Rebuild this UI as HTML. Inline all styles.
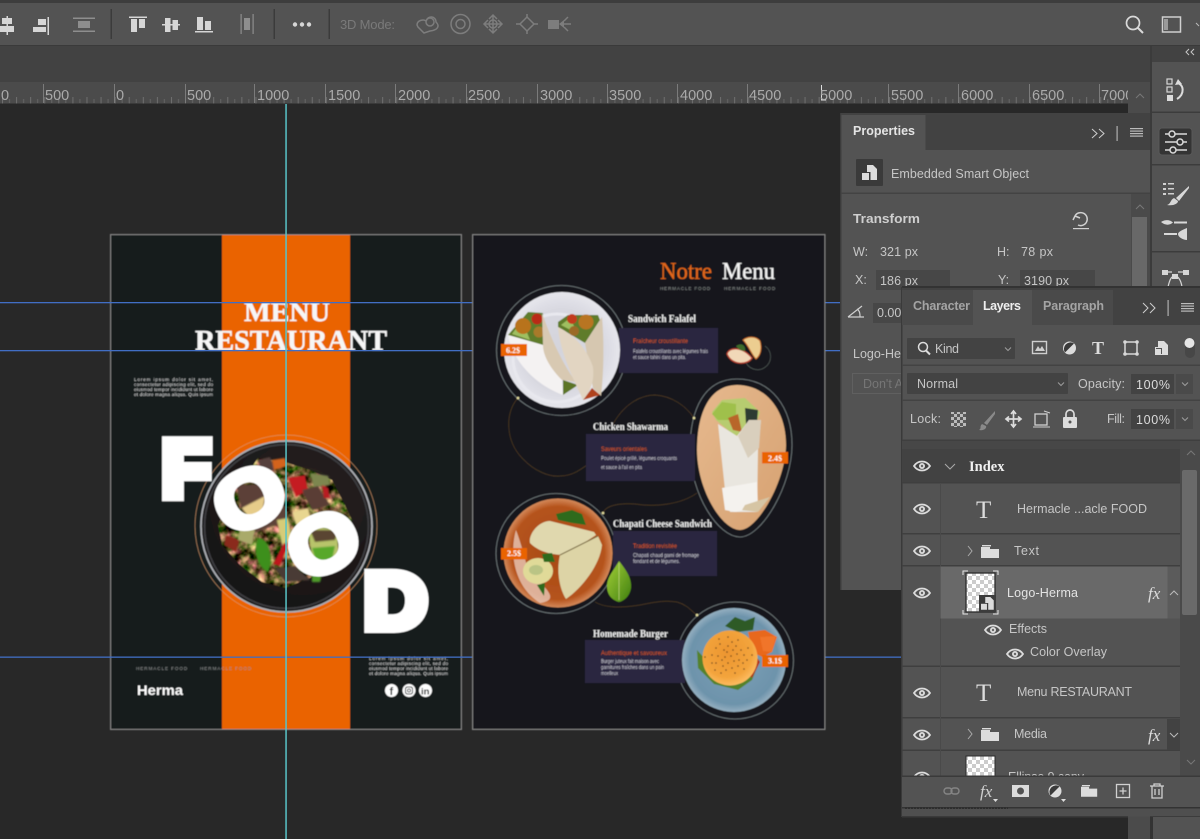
<!DOCTYPE html>
<html><head><meta charset="utf-8"><title>Menu Restaurant</title>
<style>
html,body{margin:0;padding:0;background:#282828;width:1200px;height:839px;overflow:hidden}
svg{display:block;position:absolute;left:0;top:0}
text{font-family:"Liberation Sans",sans-serif}
.s{font-family:"Liberation Serif",serif}
.ru{font-size:14.5px;fill:#aaa}
.ui{font-size:12.5px;fill:#c6c6c6}
.tab{font-size:12.5px;font-weight:bold;fill:#a4a4a4}
.t1{font-family:"Liberation Serif",serif;font-weight:bold;fill:#f2f2f2;font-size:10.5px}
.o1{fill:#d9561c;font-size:6px}
.w1{fill:#d0d0d8;font-size:5px}
.lo{fill:#dedede;font-size:4.6px}
.hf{fill:#8d9090;font-size:4.6px;letter-spacing:.8px}
.pr{font-family:"Liberation Serif",serif;font-weight:bold;font-size:8px;fill:#fff}
</style></head><body>
<svg width="1200" height="839" viewBox="0 0 1200 839" xmlns="http://www.w3.org/2000/svg">
<defs>
<filter id="b" x="-5%" y="-5%" width="110%" height="110%"><feGaussianBlur stdDeviation=".4"/></filter>
<filter id="b3" x="-5%" y="-5%" width="110%" height="110%"><feGaussianBlur stdDeviation=".7"/></filter>
<filter id="n" x="0" y="0" width="100%" height="100%" color-interpolation-filters="sRGB"><feTurbulence type="fractalNoise" baseFrequency=".12" numOctaves="3" seed="4" stitchTiles="noStitch"/><feColorMatrix values="1.800 0 0 0 -.500  1.100 .6 0 0 -.500  1.200 0 0 0 -.420  0 0 0 0 1"/><feComposite in2="SourceAlpha" operator="in"/></filter>
<pattern id="chk" width="8" height="8" patternUnits="userSpaceOnUse"><rect width="8" height="8" fill="#fff"/><rect width="4" height="4" fill="#ccc"/><rect x="4" y="4" width="4" height="4" fill="#ccc"/></pattern>
<pattern id="lk" width="6" height="6" patternUnits="userSpaceOnUse"><rect width="6" height="6" fill="#5a5a5a"/><rect width="3" height="3" fill="#bbb"/><rect x="3" y="3" width="3" height="3" fill="#bbb"/></pattern>
<pattern id="tk" width="14.08" height="6" patternUnits="userSpaceOnUse" patternTransform="translate(2 97)"><rect x="0" width="1" height="6" fill="#6f6f6f"/><rect x="7" y="2" width="1" height="4" fill="#656565"/></pattern>
<radialGradient id="pl1" cx=".5" cy=".5" r=".5"><stop offset="0" stop-color="#d4d4dc"/><stop offset=".7" stop-color="#d8d8e0"/><stop offset="1" stop-color="#e6e6ec"/></radialGradient>
<radialGradient id="pl3" cx=".5" cy=".5" r=".5"><stop offset="0" stop-color="#a74a14"/><stop offset=".85" stop-color="#b5531c"/><stop offset="1" stop-color="#d4895a"/></radialGradient>
<radialGradient id="pl4" cx=".5" cy=".5" r=".5"><stop offset="0" stop-color="#7fa2b8"/><stop offset=".85" stop-color="#6d93ab"/><stop offset="1" stop-color="#95afc0"/></radialGradient>
<radialGradient id="bun" cx=".45" cy=".4" r=".6"><stop offset="0" stop-color="#ec9530"/><stop offset=".75" stop-color="#f3a43c"/><stop offset="1" stop-color="#fdbb60"/></radialGradient>
<radialGradient id="bowl" cx=".6" cy=".35" r=".7"><stop offset="0" stop-color="#2b2524"/><stop offset="1" stop-color="#151213"/></radialGradient>
<linearGradient id="wood" x1="0" y1="0" x2="1" y2="1"><stop offset="0" stop-color="#e6b98e"/><stop offset="1" stop-color="#d6a171"/></linearGradient>
<linearGradient id="leaf" x1="0" y1="0" x2="1" y2="1"><stop offset="0" stop-color="#a4d038"/><stop offset="1" stop-color="#3f7f10"/></linearGradient>
<g id="eye"><path d="M-8 0C-4-6 4-6 8 0C4 6-4 6-8 0Z" fill="none" stroke="#dcdcdc" stroke-width="1.8"/><circle r="3" fill="#dcdcdc"/><circle r="1.2" fill="#666"/></g>
<g id="fold"><path d="M0 2H9V4H18V13H0Z" fill="#dcdcdc"/><rect x="1" y="0" width="9" height="1.4" fill="#dcdcdc"/></g>
<g id="so"><path d="M5 0H11L15 4V15H8.500V7H5Z" fill="#dcdcdc"/><rect x="0" y="8" width="7" height="7" fill="#dcdcdc"/></g>
<g id="gear" fill="none" stroke="#dadada" stroke-width="1.500"><path d="M0 0H22M0 8H22M0 16H22"/><g fill="#333"><circle cx="7" cy="0" r="3"/><circle cx="15" cy="8" r="3"/><circle cx="8" cy="16" r="3"/></g></g>
<g id="dd"><path d="M-3-1.5L0 1.5L3-1.5" fill="none" stroke="#9c9c9c" stroke-width="1"/></g>
</defs>

<!-- chrome -->
<rect width="1200" height="839" fill="#282828"/>
<rect width="1200" height="3" fill="#3d3d3d"/>
<rect y="3" width="1200" height="42" fill="#535353"/>
<rect y="45" width="1200" height="1.500" fill="#3a3a3a"/>
<rect y="46" width="1200" height="36" fill="#424242"/>
<rect y="82" width="1150" height="21.500" fill="#4b4b4b"/>
<rect y="97" width="1128" height="6.500" fill="url(#tk)"/>
<g fill="#7b7b7b"><rect x="43" y="84" width="1" height="19"/><rect x="114" y="84" width="1" height="19"/><rect x="185" y="84" width="1" height="19"/><rect x="254" y="84" width="1" height="19"/><rect x="325" y="84" width="1" height="19"/><rect x="395" y="84" width="1" height="19"/><rect x="466" y="84" width="1" height="19"/><rect x="537" y="84" width="1" height="19"/><rect x="607" y="84" width="1" height="19"/><rect x="677" y="84" width="1" height="19"/><rect x="747" y="84" width="1" height="19"/><rect x="888" y="84" width="1" height="19"/><rect x="958" y="84" width="1" height="19"/><rect x="1029" y="84" width="1" height="19"/><rect x="1099" y="84" width="1" height="19"/></g>
<path d="M821.500 85V100H826" stroke="#ddd" fill="none"/>
<text class="ru" x="1" y="100">0</text><text class="ru" x="45" y="100">500</text><text class="ru" x="116" y="100">0</text><text class="ru" x="187" y="100">500</text><text class="ru" x="257" y="100">1000</text><text class="ru" x="328" y="100">1500</text><text class="ru" x="398" y="100">2000</text><text class="ru" x="468" y="100">2500</text><text class="ru" x="540" y="100">3000</text><text class="ru" x="609" y="100">3500</text><text class="ru" x="680" y="100">4000</text><text class="ru" x="749" y="100">4500</text><text class="ru" x="820" y="100">5000</text><text class="ru" x="891" y="100">5500</text><text class="ru" x="961" y="100">6000</text><text class="ru" x="1032" y="100">6500</text><text class="ru" x="1101" y="100">7000</text>
<rect x="1128" y="82" width="22" height="757" fill="#4b4b4b"/>
<path d="M1136 98L1140 94L1144 98" stroke="#777" fill="none"/>

<!-- toolbar -->
<g fill="#d6d6d6">
<rect x="6.500" y="16" width="1.500" height="19"/><rect x="2" y="18" width="10" height="6"/><rect x="0" y="26" width="14" height="6"/>
<rect x="47.500" y="17" width="1.500" height="18"/><rect x="38" y="19" width="8" height="6"/><rect x="33" y="27" width="13" height="5"/>
<g fill="#8e8e8e"><rect x="73" y="17.500" width="22" height="1.500"/><rect x="73" y="30.500" width="22" height="1.500"/><rect x="78" y="21" width="12" height="7"/></g>
<rect x="129" y="16.500" width="18" height="1.500"/><rect x="131" y="19" width="6" height="13"/><rect x="139" y="19" width="6" height="9"/>
<rect x="162" y="24" width="18" height="1.500"/><rect x="165" y="18" width="5.500" height="14"/><rect x="172.500" y="20" width="5.500" height="10"/>
<rect x="195" y="31" width="18" height="1.500"/><rect x="197" y="17" width="6" height="13"/><rect x="205" y="21" width="6" height="9"/>
<g fill="#8e8e8e"><rect x="240.500" y="14" width="1.200" height="20"/><rect x="252.500" y="14" width="1.200" height="20"/><rect x="244" y="18" width="6" height="12"/></g>
<circle cx="295" cy="24.500" r="2.200"/><circle cx="302" cy="24.500" r="2.200"/><circle cx="309" cy="24.500" r="2.200"/>
</g>
<g fill="#3b3b3b"><rect x="110.500" y="9" width="1.500" height="30"/><rect x="273.500" y="9" width="1.500" height="30"/><rect x="328.500" y="9" width="1.500" height="30"/></g>
<text x="340" y="29" font-size="13" fill="#7a7a7a" textLength="55">3D Mode:</text>
<g fill="none" stroke="#7d7d7d" stroke-width="1.500">
<path d="M417 25C417 20 424 19 426 21C428 15 436 16 436 22C440 26 438 30 430 31L424 33L418 27Z"/><circle cx="430" cy="22" r="4"/>
<circle cx="460.500" cy="24" r="9.500"/><circle cx="460.500" cy="24" r="4.500"/>
<path d="M493 15V33M484 24H502M489 19L493 15L497 19M489 29L493 33L497 29M488 20L484 24L488 28M498 20L502 24L498 28"/><circle cx="493" cy="24" r="4"/>
<path d="M520 24L527 17L534 24L527 31Z"/><path d="M527 14V17M527 31V34M516 24H520M534 24H538"/>
<path d="M564 21L568 17M564 24H571M564 27L568 31"/>
</g>
<rect x="548" y="20" width="11" height="9" fill="#7d7d7d"/><path d="M559 24L564 20V28Z" fill="#7d7d7d"/>
<circle cx="1133" cy="23" r="6.500" fill="none" stroke="#dadada" stroke-width="1.700"/><path d="M1138 28L1143 33" stroke="#dadada" stroke-width="2"/>
<rect x="1162.500" y="17" width="18" height="15" fill="none" stroke="#d0d0d0" stroke-width="1.500"/><rect x="1164" y="19" width="4" height="11" fill="#9a9a9a"/>
<path d="M1196 23L1199 26" stroke="#bbb" fill="none"/>

<!-- artboard 1 -->
<g filter="url(#b)">
<rect x="110.500" y="234.500" width="351" height="495" fill="#161c1d" stroke="#8b8b8b" stroke-width="1"/>
<rect x="222" y="235" width="128" height="494" fill="#ea6400"/>
<circle cx="286" cy="526" r="91" fill="none" stroke="#d89a6a" stroke-width=".7" opacity=".8"/>
<circle cx="286.500" cy="526.500" r="85.500" fill="url(#bowl)" stroke="#a9abb0" stroke-width="1.800"/>
<circle cx="286.500" cy="526.500" r="82" fill="none" stroke="#3a3a3e" stroke-width="2"/>
<!-- food -->
<path d="M258 458L285 462L310 470L332 480L345 505L352 520L335 560L310 578L285 588L262 582L240 565L222 545L218 525L232 495Z" fill="#000" filter="url(#n)"/>
<g filter="url(#b3)">
<path d="M258 460L270 457L275 470L262 472Z" fill="#55403c"/><path d="M272 460L285 458L287 466L274 470Z" fill="#d4641e"/>
<path d="M288 478L305 475L308 490L296 497Z" fill="#c41c24"/>
<path d="M310 473L328 476L330 485L314 487Z" fill="#7d8650"/>
<path d="M302 490L318 486L330 505L312 510Z" fill="#5a3c34"/>
<path d="M322 485L328 488L330 498L324 498Z" fill="#b81a20"/>
<path d="M248 522L285 505L288 520L252 534Z" fill="#5d4339"/>
<path d="M292 512L308 508L312 522L296 525Z" fill="#e8d690"/>
<path d="M277 520L288 518L292 540L282 545Z" fill="#d6cc78"/>
<path d="M258 538C270 538 274 560 268 572C258 568 252 550 258 538Z" fill="#3e8f1a"/>
<path d="M284 543L288 545L280 566L273 564Z" fill="#c0141e"/>
<path d="M226 535L240 540L236 552L224 545Z" fill="#8a2c1c"/>
<path d="M240 528L255 530L252 545L238 540Z" fill="#a9aa6a"/>
<path d="M275 568L295 566L310 580L285 582Z" fill="#4a3a35"/>
<path d="M312 575L322 573L320 582L312 582Z" fill="#4f9a2a"/>
<path d="M308 528L338 528L338 558L312 562Z" fill="#b8c46a"/>
<path d="M312 548L335 546L332 560L316 561Z" fill="#58a82c"/>
<path d="M310 530L338 530L335 540L315 542Z" fill="#5a4430"/>
<path d="M236 485L265 484L265 508L242 512Z" fill="#5b4038"/>
<path d="M242 508L265 496L262 514L248 516Z" fill="#e6cc8a"/>
</g>
<!-- FOOD letters as live text -->
<g fill="#fff" stroke="#fff" font-weight="bold" style="font-family:'Liberation Sans',sans-serif">
<text x="162" y="496" font-size="79" stroke-width="10.500">F</text>
<text transform="translate(249.500 498.500) rotate(-25) scale(1.070 .930)" x="0" y="29" text-anchor="middle" font-size="85" stroke-width="7">O</text>
<text transform="translate(323.500 544) rotate(-25) scale(1.070 .930)" x="0" y="29" text-anchor="middle" font-size="85" stroke-width="7">O</text>
<text transform="translate(364 628) scale(1.100 1)" x="0" y="0" font-size="79" stroke-width="10">D</text>
</g>
<text class="s" x="244" y="321" font-size="27" font-weight="bold" fill="#f6f6f6" stroke="#f6f6f6" stroke-width=".4" textLength="86" lengthAdjust="spacingAndGlyphs">MENU</text>
<text class="s" x="195" y="350" font-size="28" font-weight="bold" fill="#f6f6f6" stroke="#f6f6f6" stroke-width=".4" textLength="192" lengthAdjust="spacingAndGlyphs">RESTAURANT</text>
<text class="lo" x="134" y="381" textLength="79" lengthAdjust="spacing">Lorem ipsum dolor sit amet,</text>
<text class="lo" x="134" y="386" textLength="79" lengthAdjust="spacing">consectetur adipiscing elit, sed do</text>
<text class="lo" x="134" y="391" textLength="79" lengthAdjust="spacing">eiusmod tempor incididunt ut labore</text>
<text class="lo" x="134" y="396" textLength="79" lengthAdjust="spacing">et dolore magna aliqua. Quis ipsum</text>
<text class="lo" x="369" y="660" textLength="79" lengthAdjust="spacing">Lorem ipsum dolor sit amet,</text>
<text class="lo" x="369" y="665" textLength="79" lengthAdjust="spacing">consectetur adipiscing elit, sed do</text>
<text class="lo" x="369" y="670" textLength="79" lengthAdjust="spacing">eiusmod tempor incididunt ut labore</text>
<text class="lo" x="369" y="675" textLength="79" lengthAdjust="spacing">et dolore magna aliqua. Quis ipsum</text>
<text class="hf" x="136" y="670" textLength="52">HERMACLE FOOD</text>
<text class="hf" x="200" y="670" textLength="52">HERMACLE FOOD</text>
<text x="137" y="695" font-size="14" font-weight="bold" fill="#fff" textLength="46" lengthAdjust="spacingAndGlyphs">Herma</text>
<circle cx="391.500" cy="690.500" r="6.500" fill="#fff"/><circle cx="409" cy="690.500" r="6.500" fill="#fff"/><circle cx="425.500" cy="690.500" r="6.500" fill="#fff"/>
<text x="389.500" y="695" font-size="11" font-weight="bold" fill="#161c1d">f</text>
<rect x="405.500" y="687" width="7" height="7" rx="2" fill="none" stroke="#161c1d"/><circle cx="409" cy="690.500" r="1.500" fill="none" stroke="#161c1d" stroke-width=".8"/>
<text x="421" y="694.500" font-size="9.500" font-weight="bold" fill="#161c1d">in</text>
</g>

<!-- guides -->
<g fill="#416ec4"><rect y="302" width="841" height="1.300"/><rect y="350" width="841" height="1.300"/><rect y="656.500" width="902" height="1.300"/></g>
<rect x="285.300" y="104" width="1.500" height="735" fill="#58c4c8"/>

<!-- artboard 2 -->
<g filter="url(#b)">
<rect x="472.500" y="234.500" width="352.500" height="495" fill="#14191b" stroke="#8b8b8b" stroke-width="1"/>
<text class="s" x="660" y="279" font-size="24" fill="#e0661a" textLength="52" lengthAdjust="spacingAndGlyphs" stroke="#e0661a" stroke-width=".3">Notre</text>
<text class="s" x="722" y="279" font-size="24" fill="#f4f4f4" textLength="53" lengthAdjust="spacingAndGlyphs" stroke="#f4f4f4" stroke-width=".3">Menu</text>
<text class="hf" x="660" y="290" textLength="51">HERMACLE FOOD</text>
<text class="hf" x="724" y="290" textLength="52">HERMACLE FOOD</text>
<!-- connectors -->
<g fill="none" stroke="#4f3a24" stroke-width=".7">
<path d="M518 398C505 412 505 440 522 458C535 472 550 477 560 476C572 476 580 470 587 465"/>
<path d="M611 428C622 405 640 395 655 395C672 396 686 406 694 418"/>
<path d="M603 513C606 505 620 503 635 504C655 507 680 505 697 493"/>
<path d="M595 602C605 608 620 608 640 605C655 602 665 600 677 602C688 605 692 612 697 615"/>
</g>
<!-- plate 1 -->
<circle cx="561.500" cy="350.500" r="65" fill="none" stroke="#737b7e" stroke-width=".8"/>
<path d="M745 360A13 13 0 1 0 765 346" fill="none" stroke="#4e5553" stroke-width=".7"/>
<rect x="619" y="328" width="99" height="45" fill="#2a2640"/>
<circle cx="562" cy="350" r="58" fill="url(#pl1)"/>
<circle cx="557" cy="358" r="44" fill="none" stroke="#e8e8ee" stroke-width="3"/>
<path d="M508 335L528 312L543 313L543 345Z" fill="#5f7c2c"/>
<path d="M512 334L522 320L530 340Z" fill="#9fbf60"/>
<circle cx="523" cy="326" r="8" fill="#b8731e"/><circle cx="537" cy="319" r="5.500" fill="#b92c18"/><circle cx="539" cy="332" r="5.500" fill="#a87a2c"/>
<path d="M508 335L543 345L562 380L563 395C535 385 512 360 508 335Z" fill="#f4f2f2"/>
<path d="M542 313C550 335 560 360 576 382L562 380C552 370 543 357 543 345Z" fill="#d8c9b2"/>
<path d="M563 380L578 385L563 395Z" fill="#5c7426"/>
<path d="M558 322L568 315L598 315L600 320L585 343L558 327Z" fill="#5f7c2c"/>
<path d="M561 325L570 318L578 334Z" fill="#9fbf60"/>
<circle cx="586" cy="322" r="7.500" fill="#b87524"/><circle cx="572" cy="319" r="5" fill="#c23a1e"/><circle cx="574" cy="331" r="5" fill="#9b6a28"/>
<path d="M585 343L602 317C604 340 604 370 601 396L593 388Z" fill="#d6c7b0"/>
<path d="M583 400L592 388L600 395Z" fill="#b0431c"/>
<path d="M558 327C570 333 586 345 593 367C594 378 593 388 583 400C578 388 560 355 558 327Z" fill="#e2d5c2"/>
<rect x="501" y="344" width="26" height="12" fill="#ea6400"/><text class="pr" x="506" y="353">6.2$</text>
<text class="t1" x="628" y="322" textLength="68" lengthAdjust="spacingAndGlyphs">Sandwich  Falafel</text>
<text class="o1" x="633" y="343" textLength="55" lengthAdjust="spacingAndGlyphs">Fraîcheur croustillante</text>
<text class="w1" x="633" y="353" textLength="75" lengthAdjust="spacingAndGlyphs">Falafels croustillants avec légumes frais</text>
<text class="w1" x="633" y="359" textLength="53" lengthAdjust="spacingAndGlyphs">et sauce tahini dans un pita.</text>
<!-- apple -->
<path d="M727 354C729 347 742 346 752 358C748 365 732 366 727 354Z" fill="#f1d8b8" stroke="#b84230" stroke-width="1.300"/>
<path d="M743 340C748 336 756 336 760 341C762 348 761 355 756 359C751 354 749 346 743 340Z" fill="#eccd90" stroke="#c46a2c" stroke-width="1"/>
<path d="M736 346C742 342 746 346 745 351C741 351 738 349 736 346Z" fill="#3c6a2a"/>
<!-- plate 2 -->
<path d="M737 379C772 379 792 408 792 445C792 485 762 537 740 537C718 537 691 495 690 450C690 408 705 379 737 379Z" fill="none" stroke="#737b7e" stroke-width=".8"/>
<rect x="586" y="434" width="109" height="47" fill="#2a2640"/>
<path d="M737 385C766 385 786 410 786 445C786 480 758 530 740 530C722 530 697 490 697 450C697 412 710 385 737 385Z" fill="url(#wood)"/>
<path d="M712 412L722 400L745 398L760 412L755 428L735 436L716 420Z" fill="#b7cc70"/>
<path d="M712 414L722 402L736 404L736 420L718 420Z" fill="#9fc04c"/>
<path d="M745 408L758 410L757 423L746 424Z" fill="#2e3a30"/>
<path d="M728 418L738 414L742 432L733 430Z" fill="#b8662c"/>
<path d="M718 424L737 436L749 420L761 420L758 450L757 512L730 512L725 490Z" fill="#e9e6df"/>
<path d="M738 436L749 420L761 420L759 448L748 458Z" fill="#d9cfbd"/>
<path d="M722 488L757 482L758 507L735 512L725 510Z" fill="#f4f2ee"/>
<path d="M745 505L770 497L758 512L742 510Z" fill="#d6c5a4"/>
<rect x="762" y="452" width="26" height="11.500" fill="#ea6400"/><text class="pr" x="768" y="461">2.4$</text>
<text class="t1" x="593" y="430" textLength="75" lengthAdjust="spacingAndGlyphs">Chicken Shawarma</text>
<text class="o1" x="601" y="451" textLength="46" lengthAdjust="spacingAndGlyphs">Saveurs orientales</text>
<text class="w1" x="601" y="460" textLength="76" lengthAdjust="spacingAndGlyphs">Poulet épicé grillé, légumes croquants</text>
<text class="w1" x="601" y="469" textLength="41" lengthAdjust="spacingAndGlyphs">et sauce à l'ail en pita</text>
<!-- plate 3 -->
<circle cx="556" cy="553.500" r="60" fill="none" stroke="#737b7e" stroke-width=".8"/>
<rect x="613" y="531" width="104" height="45" fill="#2a2640"/>
<circle cx="558" cy="553" r="54.500" fill="url(#pl3)"/>
<path d="M516 530C510 550 512 585 540 603C560 600 548 590 528 570C524 555 520 540 516 530Z" fill="#e9c8b8" opacity=".8"/>
<path d="M590 555C590 580 575 590 565 596L575 570Z" fill="#e6c4ae" opacity=".6"/>
<path d="M550 521L594 532L596 535L566 555C550 555 538 551 530 543C528 535 538 521 550 521Z" fill="#e0d8ae"/>
<path d="M560 555L598 536L602 545C600 565 582 588 566 599C560 590 556 572 560 555Z" fill="#ddd4a6"/>
<path d="M560 555L598 536" stroke="#7a6a40" stroke-width="1"/>
<ellipse cx="538" cy="571" rx="15" ry="13" fill="#e0da98"/>
<ellipse cx="536" cy="570" rx="7" ry="5" fill="#a9bb7e" opacity=".7"/>
<path d="M556 514L572 510L582 514L586 525L572 523L558 520Z" fill="#2f6a1e"/>
<path d="M542 554L552 553L555 562L544 562Z" fill="#2f6a1e"/><path d="M537 585L545 583L544 596Z" fill="#2f6a1e"/>
<rect x="501" y="548" width="26" height="11.500" fill="#ea6400"/><text class="pr" x="507" y="556">2.5$</text>
<path d="M619 561C626 570 632 578 631 588C630 596 624 601 619 602C612 600 607 595 607 586C607 577 614 570 619 561Z" fill="url(#leaf)"/>
<path d="M619 563V600" stroke="#cfe08a" stroke-width=".6"/>
<text class="t1" x="613" y="527" textLength="99" lengthAdjust="spacingAndGlyphs">Chapati Cheese Sandwich</text>
<text class="o1" x="633" y="548" textLength="44" lengthAdjust="spacingAndGlyphs">Tradition revisitée</text>
<text class="w1" x="633" y="557" textLength="66" lengthAdjust="spacingAndGlyphs">Chapati chaud garni de fromage</text>
<text class="w1" x="633" y="563" textLength="47" lengthAdjust="spacingAndGlyphs">fondant et de légumes.</text>
<!-- plate 4 -->
<circle cx="735" cy="660.500" r="58.500" fill="none" stroke="#737b7e" stroke-width=".8"/>
<rect x="585" y="640" width="100" height="43" fill="#2a2640"/>
<circle cx="734" cy="660" r="52" fill="url(#pl4)"/>
<path d="M725 626L735 617L745 621L755 617L753 630L738 632Z" fill="#2f5a28"/>
<path d="M748 632L765 630L777 637L772 652L762 657L752 652Z" fill="#e8681c"/>
<path d="M760 637L776 636L772 652L763 651Z" fill="#f0742a"/>
<path d="M697 650L698 668L714 684L738 690L752 680L760 660L750 672L715 670Z" fill="#55822c"/>
<path d="M752 650L760 662L752 678L745 670Z" fill="#b0321a"/>
<circle cx="730" cy="658" r="27.500" fill="url(#bun)"/>
<path d="M716 648h0M720 644h0M724 650h0M712 655h0M718 656h0M722 660h0M728 646h0M732 642h0M727 652h0M733 650h0M736 646h0M731 656h0M725 657h0M737 654h0M741 650h0M744 655h0M739 660h0M734 661h0M728 663h0M723 666h0M716 663h0M738 666h0M743 663h0M732 668h0M726 670h0M747 660h0M719 639h0M738 640h0M712 663h0M735 673h0M744 669h0M721 673h0M715 670h0M728 637h0M748 648h0M705 657h0M752 655h0" stroke="#5a3a1c" stroke-width="1.500" stroke-linecap="round" fill="none"/>
<rect x="762" y="655" width="26" height="12" fill="#ea6400"/><text class="pr" x="768" y="663.500">3.1$</text>
<text class="t1" x="593" y="637" textLength="75" lengthAdjust="spacingAndGlyphs">Homemade Burger</text>
<text class="o1" x="601" y="655" textLength="66" lengthAdjust="spacingAndGlyphs">Authentique et savoureux</text>
<text class="w1" x="601" y="663" textLength="58" lengthAdjust="spacingAndGlyphs">Burger juteux fait maison avec</text>
<text class="w1" x="601" y="669" textLength="63" lengthAdjust="spacingAndGlyphs">garnitures fraîches dans un pain</text>
<text class="w1" x="601" y="675" textLength="17" lengthAdjust="spacingAndGlyphs">moelleux</text>
<circle cx="518" cy="398" r="1.300" fill="#e8e0a0"/><circle cx="694" cy="418" r="1.300" fill="#e8e0a0"/><circle cx="603" cy="513" r="1.300" fill="#e8e0a0"/><circle cx="697" cy="615" r="1.300" fill="#e8e0a0"/>
</g>

<!-- properties panel -->
<rect x="841" y="113" width="309" height="477" fill="#535353"/>
<rect x="840" y="113" width="1.500" height="477" fill="#3c3c3c"/>
<rect x="841" y="113" width="309" height="37" fill="#424242"/>
<rect x="841.500" y="115" width="84" height="35" fill="#535353"/>
<text x="853" y="135" font-size="12.500" font-weight="bold" fill="#e4e4e4" textLength="62">Properties</text>
<path d="M1092 129L1097 133.500L1092 138M1099 129L1104 133.500L1099 138" fill="none" stroke="#cfcfcf"/>
<rect x="1116.500" y="126" width="1.200" height="15" fill="#b0b0b0"/>
<g fill="#bbb"><rect x="1130" y="128" width="13" height="1.200"/><rect x="1130" y="130.500" width="13" height="1.200"/><rect x="1130" y="133" width="13" height="1.200"/><rect x="1130" y="135.500" width="13" height="1.200"/></g>
<rect x="856" y="159" width="27" height="27" rx="1" fill="#3a3a3a"/><use href="#so" x="862" y="165"/>
<text x="891" y="178" class="ui" textLength="138">Embedded Smart Object</text>
<rect x="841" y="192.500" width="309" height="1.500" fill="#434343"/>
<text x="853" y="223" font-size="13" font-weight="bold" fill="#cfcfcf" textLength="67" lengthAdjust="spacingAndGlyphs">Transform</text>
<path d="M1075 216A6.500 6.500 0 1 1 1078 225M1075 216L1073 220M1075 216L1080 218" fill="none" stroke="#d0d0d0" stroke-width="1.500"/><rect x="1073" y="228" width="16" height="1.200" fill="#d0d0d0"/>
<text x="853" y="256" class="ui">W:</text><text x="880" y="256" class="ui" textLength="38">321 px</text>
<text x="997" y="256" class="ui">H:</text><text x="1021" y="256" class="ui" textLength="32">78 px</text>
<text x="855" y="284" class="ui">X:</text><rect x="876" y="270" width="74" height="20" fill="#474747"/><text x="880" y="285" class="ui" textLength="38">186 px</text>
<text x="998" y="284" class="ui">Y:</text><rect x="1020" y="270" width="75" height="20" fill="#474747"/><text x="1024" y="285" class="ui" textLength="45">3190 px</text>
<path d="M848 317H864M848 317L862 306M857 309C860 311 860 314 860 317" fill="none" stroke="#cfcfcf" stroke-width="1.200"/>
<rect x="873" y="303" width="40" height="20" fill="#474747"/><text x="877" y="317" class="ui">0.00</text>
<text x="853" y="358" class="ui">Logo-Herma</text>
<rect x="852.500" y="373.500" width="80" height="20" fill="none" stroke="#606060"/><text x="863" y="388" class="ui" style="fill:#767676">Don't Apply</text>
<rect x="1131" y="194" width="19" height="396" fill="#4a4a4a"/><rect x="1132" y="217" width="15" height="373" fill="#686868"/>
<path d="M1136 209L1140 205L1144 209" stroke="#777" fill="none"/>

<!-- right dock -->
<rect x="1151" y="46" width="49" height="241" fill="#535353"/>
<rect x="1150" y="46" width="2" height="241" fill="#3b3b3b"/>
<rect x="1152" y="46" width="48" height="16" fill="#424242"/>
<path d="M1189 49L1186 52L1189 55M1194 49L1191 52L1194 55" fill="none" stroke="#c8c8c8"/>
<g fill="#3c3c3c"><rect x="1152" y="111.500" width="48" height="1.500"/><rect x="1152" y="164" width="48" height="1.500"/><rect x="1152" y="251" width="48" height="1.500"/></g>
<g fill="none" stroke="#d6d6d6" stroke-width="1.200"><rect x="1167" y="79" width="5" height="5"/><rect x="1167" y="87" width="5" height="5"/></g>
<rect x="1167" y="95" width="6" height="6" fill="#dcdcdc"/>
<path d="M1177 83C1184 84 1185 94 1177 99" fill="none" stroke="#dcdcdc" stroke-width="2"/><path d="M1175 85L1178 79L1182 84Z" fill="#dcdcdc"/>
<rect x="1159" y="128" width="33" height="27" rx="3" fill="#343434" stroke="#585858"/>
<use href="#gear" x="1165" y="134"/>
<g fill="#d0d0d0"><rect x="1163" y="183" width="3" height="2"/><rect x="1168" y="183" width="6" height="1.500"/><rect x="1163" y="188" width="3" height="2"/><rect x="1168" y="188" width="6" height="1.500"/><rect x="1163" y="193" width="3" height="2"/><rect x="1168" y="193" width="6" height="1.500"/></g>
<path d="M1189 186L1176 198L1179 201L1189 188Z" fill="#d8d8d8"/><path d="M1174 198C1170 200 1171 204 1167 205C1173 206 1178 204 1178 201Z" fill="#d8d8d8"/>
<path d="M1161 222C1166 219 1170 220 1173 222.500C1170 225 1166 226 1161 222Z" fill="#d8d8d8"/><rect x="1174" y="221.500" width="13" height="2" fill="#d8d8d8"/>
<rect x="1164" y="233" width="13" height="2" fill="#d8d8d8"/><path d="M1187 228C1182 230 1178 232 1178 234C1178 237 1183 240 1187 240Z" fill="#d8d8d8"/>
<g fill="#d6d6d6"><rect x="1162" y="270" width="6" height="5"/><rect x="1172" y="274" width="6" height="5"/><rect x="1183" y="270" width="6" height="5"/></g>
<path d="M1168 272H1172M1178 272H1183M1168 287C1170 278 1172 276 1175 276C1178 276 1181 280 1182 287" fill="none" stroke="#d6d6d6" stroke-width="1.200"/>

<!-- layers panel -->
<rect x="902" y="287" width="298" height="529" fill="#535353"/>
<rect x="902" y="286" width="298" height="2" fill="#333"/>
<rect x="901" y="287" width="1.500" height="530" fill="#3a3a3a"/>
<rect x="902" y="288" width="298" height="37" fill="#424242"/>
<rect x="902" y="290" width="71" height="35" fill="#4a4a4a"/><text x="913" y="310" class="tab" textLength="57">Character</text>
<rect x="973" y="290" width="59" height="36" fill="#535353"/><text x="983" y="310" class="tab" style="fill:#efefef" textLength="38">Layers</text>
<rect x="1032" y="290" width="81" height="35" fill="#4a4a4a"/><text x="1043" y="310" class="tab" textLength="61">Paragraph</text>
<path d="M1143 303L1148 308L1143 313M1150 303L1155 308L1150 313" fill="none" stroke="#cfcfcf"/>
<rect x="1167.500" y="300" width="1.200" height="16" fill="#b0b0b0"/>
<g fill="#bbb"><rect x="1181" y="303" width="13" height="1.200"/><rect x="1181" y="305.500" width="13" height="1.200"/><rect x="1181" y="308" width="13" height="1.200"/><rect x="1181" y="310.500" width="13" height="1.200"/></g>
<rect x="907" y="338" width="108" height="21" rx="1" fill="#434343"/>
<circle cx="923" cy="347" r="4.500" fill="none" stroke="#dcdcdc" stroke-width="1.500"/><path d="M926 350.500L930 354.500" stroke="#dcdcdc" stroke-width="2"/>
<text x="935" y="353" class="ui" textLength="24">Kind</text><use href="#dd" x="1008" y="349"/>
<rect x="1032.500" y="341.500" width="14" height="12" fill="none" stroke="#cfcfcf" stroke-width="1.400"/><path d="M1035 351L1038 346L1040 349L1042 346L1045 351Z" fill="#cfcfcf"/>
<circle cx="1069.500" cy="348" r="6.500" fill="#dcdcdc"/><path d="M1065 352.500L1074 343.500A6.500 6.500 0 0 0 1065 352.500Z" fill="#3a3a3a"/>
<text x="1092" y="354" font-size="18" class="s" font-weight="bold" fill="#dcdcdc">T</text>
<rect x="1125" y="342" width="12" height="12" fill="none" stroke="#d8d8d8" stroke-width="1.500"/><g fill="#d8d8d8"><circle cx="1125" cy="342" r="1.800"/><circle cx="1137" cy="342" r="1.800"/><circle cx="1125" cy="354" r="1.800"/><circle cx="1137" cy="354" r="1.800"/></g>
<path d="M1158 341H1164L1168 345V355H1155V347H1158Z" fill="#dcdcdc"/><rect x="1156" y="348" width="6" height="6" fill="#535353"/><rect x="1156" y="349" width="5" height="5" fill="#dcdcdc"/>
<rect x="1185" y="338" width="10" height="20" rx="5" fill="#474747"/><circle cx="1189.500" cy="343" r="5" fill="#e6e6e6"/>
<rect x="902" y="364.500" width="298" height="1.500" fill="#434343"/>
<rect x="907" y="373" width="161" height="21" rx="1" fill="#434343"/><text x="917" y="388" class="ui" textLength="41">Normal</text><use href="#dd" x="1061" y="384"/>
<text x="1078" y="388" class="ui" textLength="47">Opacity:</text>
<rect x="1131" y="374" width="43" height="20" fill="#434343"/><text x="1136" y="389" class="ui" style="fill:#dcdcdc" textLength="34">100%</text>
<rect x="1176" y="374" width="17" height="20" fill="#4a4a4a"/><use href="#dd" x="1185" y="384"/>
<rect x="902" y="399.500" width="298" height="1.500" fill="#434343"/>
<text x="910" y="423" class="ui" textLength="31">Lock:</text>
<rect x="951" y="412" width="15" height="15" fill="url(#lk)"/>
<path d="M995 411L984 423L987 425L995 414Z" fill="#8a8a8a"/><path d="M982 424C979 427 982 428 979 430C984 431 987 428 986 426Z" fill="#8a8a8a"/>
<path d="M1013.500 411V427M1006 419H1021M1011 414L1013.500 411L1016 414M1011 424L1013.500 427L1016 424M1009 416.500L1006 419L1009 421.500M1018 416.500L1021 419L1018 421.500" fill="none" stroke="#dcdcdc" stroke-width="1.700"/>
<rect x="1035" y="414" width="12" height="11" fill="none" stroke="#cfcfcf" stroke-width="1.300"/><path d="M1033 427H1050M1044 411L1050 413" stroke="#cfcfcf" fill="none"/>
<rect x="1063" y="417" width="14" height="11" rx="1" fill="#dcdcdc"/><path d="M1066 417V414A4 4 0 0 1 1074 414V417" fill="none" stroke="#dcdcdc" stroke-width="1.700"/><circle cx="1070" cy="422" r="1.500" fill="#535353"/>
<text x="1107" y="423" class="ui" textLength="18">Fill:</text>
<rect x="1131" y="409" width="43" height="20" fill="#434343"/><text x="1136" y="424" class="ui" style="fill:#dcdcdc" textLength="34">100%</text>
<rect x="1176" y="409" width="17" height="20" fill="#4a4a4a"/><use href="#dd" x="1185" y="419"/>
<rect x="902" y="439.500" width="298" height="1.500" fill="#3f3f3f"/>
<!-- layers list -->
<rect x="1180" y="441" width="20" height="335" fill="#4a4a4a"/><rect x="1182" y="470" width="15" height="145" rx="2" fill="#6a6a6a"/>
<path d="M1187 455L1191 451L1195 455M1187 760L1191 764L1195 760" stroke="#777" fill="none"/>
<rect x="902" y="449" width="278" height="33" fill="#424242"/>
<rect x="902" y="441" width="278" height="8" fill="#474747"/>
<use href="#eye" x="922" y="466"/><path d="M945 464L950 469L955 464" fill="none" stroke="#aaa"/>
<text x="969" y="471" font-size="14.500" class="s" font-weight="bold" fill="#f0f0f0">Index</text>
<g fill="#3f3f3f"><rect x="902" y="482" width="278" height="1.500"/><rect x="902" y="533" width="278" height="1.500"/><rect x="902" y="565" width="278" height="1.500"/><rect x="902" y="665.500" width="278" height="1.500"/><rect x="902" y="717" width="278" height="1.500"/><rect x="902" y="749.500" width="278" height="1.500"/></g>
<rect x="940" y="483" width="1" height="293" fill="#4a4a4a"/>
<use href="#eye" x="922" y="509"/><text x="976" y="518" font-size="25" class="s" fill="#dcdcdc">T</text><text x="1017" y="513" class="ui" textLength="130">Hermacle ...acle FOOD</text>
<use href="#eye" x="922" y="551"/><path d="M968 546L972 551L968 556" fill="none" stroke="#aaa"/><use href="#fold" x="981" y="545"/><text x="1014" y="555" class="ui" textLength="25">Text</text>
<use href="#eye" x="922" y="593"/>
<rect x="940.500" y="566.500" width="227" height="52" fill="#696969"/><rect x="1167.500" y="566.500" width="12.500" height="52" fill="#5b5b5b"/>
<rect x="966" y="573" width="29" height="39" fill="url(#chk)" stroke="#2b2b2b" stroke-width="1.300"/>
<path d="M963 575V571H968M993 571H998V575M963 610V614H968M993 614H998V610" fill="none" stroke="#e6e6e6"/>
<rect x="979" y="595" width="17" height="17" fill="#3c3c3c"/><use href="#so" transform="translate(981 597) scale(.85)"/>
<text x="1007" y="597" class="ui" style="fill:#e4e4e4" textLength="71">Logo-Herma</text>
<text x="1148" y="599" font-size="17" fill="#dcdcdc" font-style="italic" style="font-family:'Liberation Serif',serif">fx</text>
<path d="M1170 595L1174 591L1178 595" fill="none" stroke="#bbb"/>
<use href="#eye" x="993" y="630"/><text x="1009" y="633" class="ui" textLength="38">Effects</text>
<use href="#eye" x="1015" y="654"/><text x="1030" y="656" class="ui" textLength="77">Color Overlay</text>
<use href="#eye" x="922" y="693"/><text x="976" y="701" font-size="25" class="s" fill="#dcdcdc">T</text><text x="1017" y="696" class="ui" textLength="115">Menu  RESTAURANT</text>
<use href="#eye" x="922" y="735"/><path d="M968 729L972 734L968 739" fill="none" stroke="#aaa"/><use href="#fold" x="981" y="728"/><text x="1014" y="738" class="ui" textLength="33">Media</text>
<text x="1148" y="741" font-size="17" fill="#dcdcdc" font-style="italic" style="font-family:'Liberation Serif',serif">fx</text>
<rect x="1167" y="719" width="13" height="31" fill="#424242"/><path d="M1170 733L1174 737L1178 733" fill="none" stroke="#bbb"/>
<rect x="966" y="756" width="29" height="24" fill="url(#chk)" stroke="#2b2b2b"/>
<use href="#eye" x="922" y="777"/><text x="1008" y="781" class="ui" textLength="76">Ellipse 9 copy</text>
<!-- footer -->
<rect x="902" y="776" width="298" height="31" fill="#535353"/><rect x="902" y="775.500" width="298" height="1.500" fill="#3a3a3a"/>
<rect x="902" y="807" width="298" height="1.500" fill="#333"/><rect x="902" y="808.500" width="298" height="8" fill="#4f4f4f"/>
<rect x="902" y="816" width="226" height="1.500" fill="#3a3a3a"/>
<rect x="1150" y="817" width="3" height="22" fill="#333"/><rect x="1153" y="817" width="47" height="22" fill="#535353"/>
<path d="M905 808.300H1008" stroke="#222" stroke-dasharray="2 1"/>
<rect x="944" y="788" width="8" height="6" rx="3" fill="none" stroke="#858585" stroke-width="1.400"/><rect x="951" y="788" width="8" height="6" rx="3" fill="none" stroke="#858585" stroke-width="1.400"/>
<text x="980" y="797" font-size="17" fill="#d0d0d0" font-style="italic" style="font-family:'Liberation Serif',serif">fx</text><path d="M993 799H998L995.500 802Z" fill="#ddd"/>
<rect x="1012" y="785" width="17" height="12" fill="#dcdcdc"/><circle cx="1020.500" cy="791" r="3.500" fill="#535353"/>
<circle cx="1055" cy="791" r="6.500" fill="#dcdcdc"/><path d="M1050.500 795.500L1059.500 786.500A6.500 6.500 0 0 0 1050.500 795.500Z" fill="#3a3a3a"/><path d="M1061 799H1066L1063.500 802Z" fill="#ddd"/>
<use href="#fold" transform="translate(1081 785) scale(.9)"/>
<rect x="1116.500" y="784.500" width="13" height="13" fill="none" stroke="#d0d0d0" stroke-width="1.300"/><path d="M1123 787.500V794.500M1119.500 791H1126.500" stroke="#d0d0d0" stroke-width="1.300"/>
<path d="M1150 786H1164M1154 786V784H1160V786M1152 786V798H1162V786M1155 789V795M1159 789V795" fill="none" stroke="#d0d0d0" stroke-width="1.300"/>
</svg>
</body></html>
